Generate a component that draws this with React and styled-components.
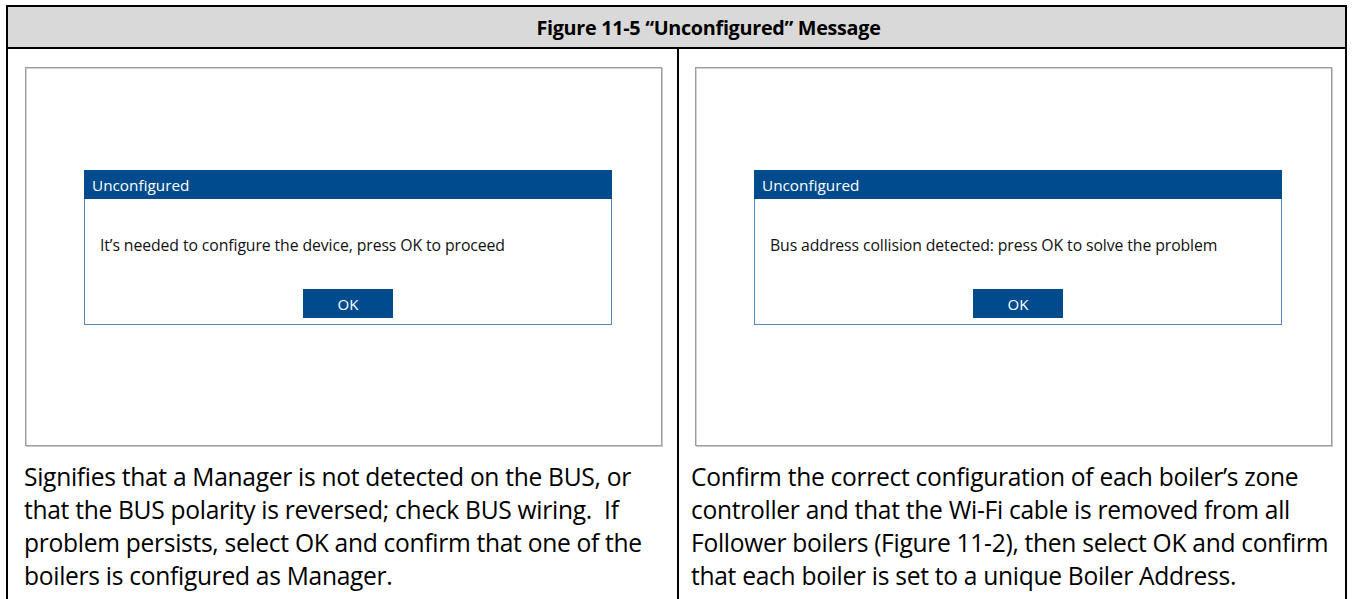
import React from "react";
import styled, { createGlobalStyle } from "styled-components";

const GlobalStyle = createGlobalStyle`
  html, body {
    margin: 0;
    padding: 0;
    background: #ffffff;
    overflow: hidden;
  }
  body {
    font-family: "Open Sans", "Liberation Sans", sans-serif;
    color: #000;
  }
`;

const panels = [
  {
    message: "It’s needed to configure the device, press OK to proceed",
    lines: [
      "Signifies that a Manager is not detected on the BUS, or",
      "that the BUS polarity is reversed; check BUS wiring.  If",
      "problem persists, select OK and confirm that one of the",
      "boilers is configured as Manager.",
    ],
  },
  {
    message: "Bus address collision detected: press OK to solve the problem",
    lines: [
      "Confirm the correct configuration of each boiler’s zone",
      "controller and that the Wi-Fi cable is removed from all",
      "Follower boilers (Figure 11-2), then select OK and confirm",
      "that each boiler is set to a unique Boiler Address.",
    ],
  },
];

export default function App() {
  return (
    <>
      <GlobalStyle />
      <Page>
        <Table>
          <Header>Figure 11-5 “Unconfigured” Message</Header>
          <Body>
            {panels.map((panel, index) => (
              <Cell key={index} $first={index === 0}>
                <Screen>
                  <Dialog>
                    <DialogTitle>Unconfigured</DialogTitle>
                    <DialogMessage>{panel.message}</DialogMessage>
                    <OkButton>OK</OkButton>
                  </Dialog>
                </Screen>
                <Caption $first={index === 0}>
                  {panel.lines.map((line, i) => (
                    <CaptionLine key={i}>{line}</CaptionLine>
                  ))}
                </Caption>
              </Cell>
            ))}
          </Body>
        </Table>
      </Page>
    </>
  );
}

const Page = styled.div`
  padding: 5px 0 0 6px;
`;

const Table = styled.div`
  width: 1341px;
  border: 2px solid #000;
  box-sizing: border-box;
`;

const Header = styled.div`
  height: 40px;
  background: #d9d9d9;
  border-bottom: 2px solid #000;
  display: flex;
  align-items: center;
  justify-content: center;
  padding-left: 64px;
  font-family: "Open Sans", sans-serif;
  font-weight: 700;
  font-size: 19.8px;
  letter-spacing: -0.3px;
`;

const Body = styled.div`
  display: grid;
  grid-template-columns: 671px 666px;
`;

const Cell = styled.div`
  padding: 18px 0 40px ${(p) => (p.$first ? "17px" : "16px")};
  border-right: ${(p) => (p.$first ? "2px solid #000" : "none")};
`;

const Screen = styled.div`
  width: 637px;
  height: 379px;
  box-sizing: border-box;
  border: 1px solid #9d9d9d;
  box-shadow: inset 1px 1px 0 #d2d2d2, 1px 1px 0 #c8c8c8;
  padding: 102px 0 0 58px;
`;

const Dialog = styled.div`
  width: 528px;
  height: 155px;
  box-sizing: border-box;
  border: 1px solid #5b86bd;
  display: flex;
  flex-direction: column;
  align-items: stretch;
`;

const DialogTitle = styled.div`
  height: 29px;
  background: #004b8d;
  color: #fff;
  font-size: 15.3px;
  display: flex;
  align-items: center;
  padding-left: 8px;
  margin: -1px -1px 0;
`;

const DialogMessage = styled.div`
  font-size: 15.8px;
  letter-spacing: -0.1px;
  color: #111;
  padding: 34px 0 0 15px;
  height: 24px;
  line-height: 24px;
`;

const OkButton = styled.div`
  align-self: center;
  margin-top: 32px;
  width: 90px;
  height: 29px;
  background: #004b8d;
  color: #fff;
  font-size: 15px;
  display: flex;
  align-items: center;
  justify-content: center;
`;

const Caption = styled.div`
  margin: 14px 0 0 ${(p) => (p.$first ? "-1px" : "-4px")};
  font-size: 24.6px;
  line-height: 33px;
  letter-spacing: -0.3px;
  color: #000;
`;

const CaptionLine = styled.div`
  white-space: pre;
`;
